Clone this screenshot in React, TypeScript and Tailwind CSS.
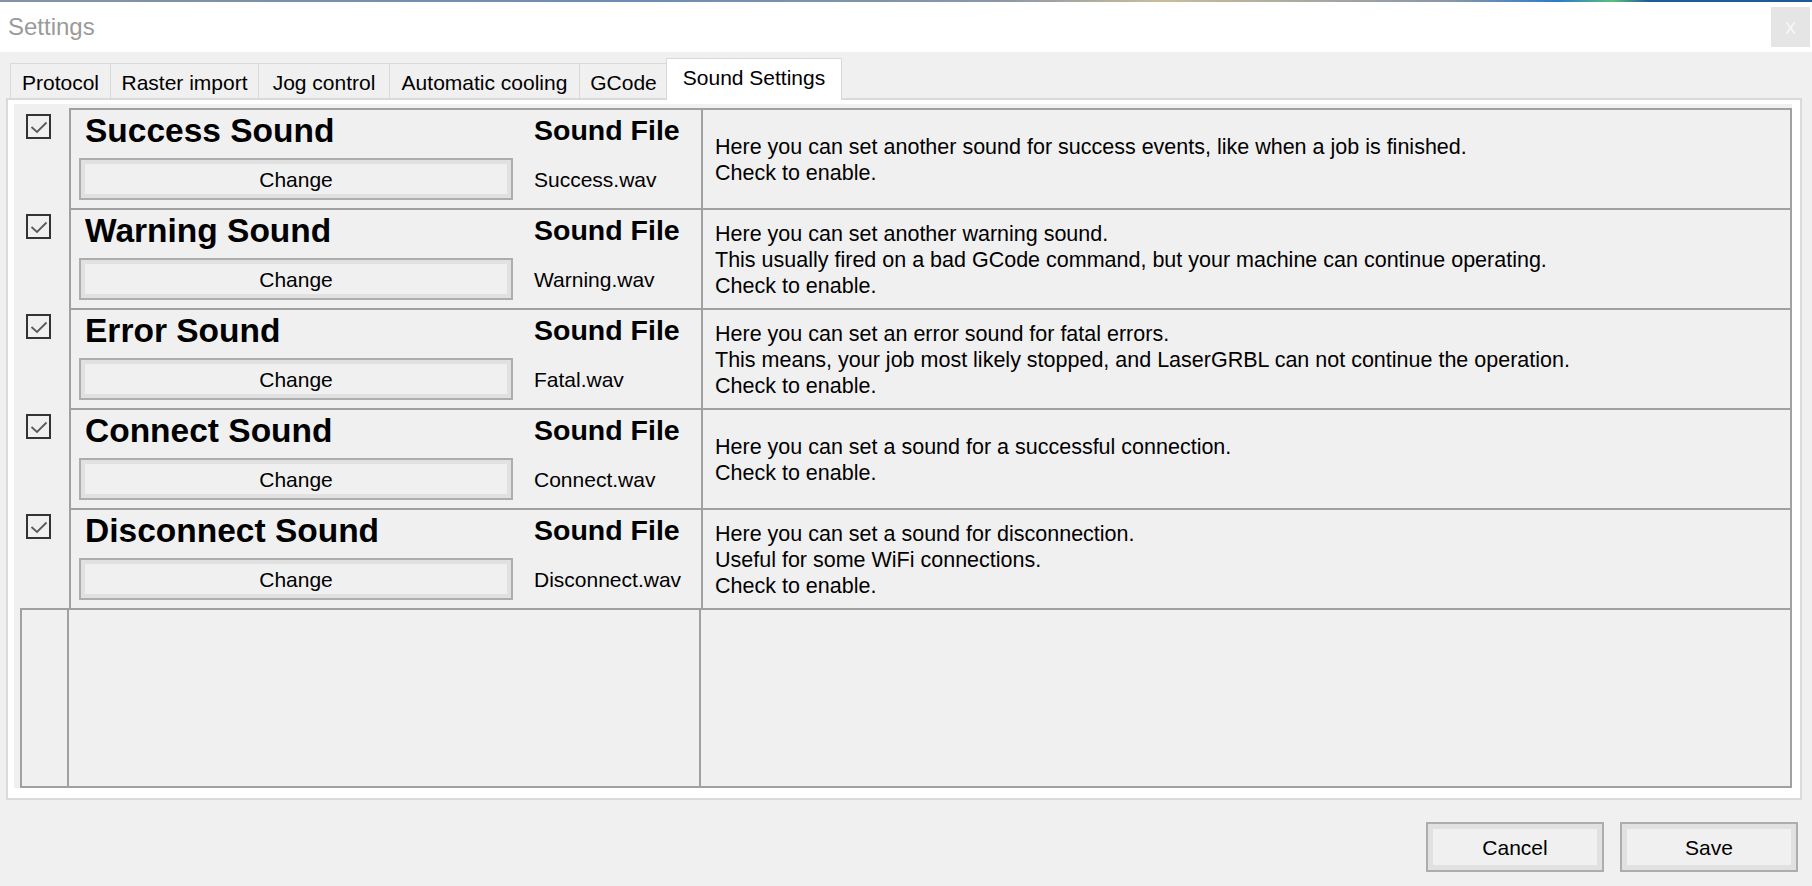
import React from 'react';

interface SoundRow {
  title: string;
  file: string;
  lines: string[];
}

const rows: SoundRow[] = [
  {
    title: 'Success Sound',
    file: 'Success.wav',
    lines: ['Here you can set another sound for success events, like when a job is finished.', 'Check to enable.'],
  },
  {
    title: 'Warning Sound',
    file: 'Warning.wav',
    lines: [
      'Here you can set another warning sound.',
      'This usually fired on a bad GCode command, but your machine can continue operating.',
      'Check to enable.',
    ],
  },
  {
    title: 'Error Sound',
    file: 'Fatal.wav',
    lines: [
      'Here you can set an error sound for fatal errors.',
      'This means, your job most likely stopped, and LaserGRBL can not continue the operation.',
      'Check to enable.',
    ],
  },
  {
    title: 'Connect Sound',
    file: 'Connect.wav',
    lines: ['Here you can set a sound for a successful connection.', 'Check to enable.'],
  },
  {
    title: 'Disconnect Sound',
    file: 'Disconnect.wav',
    lines: ['Here you can set a sound for disconnection.', 'Useful for some WiFi connections.', 'Check to enable.'],
  },
];

const tabs = [
  { label: 'Protocol', w: 'w-[100px]' },
  { label: 'Raster import', w: 'w-[148px]' },
  { label: 'Jog control', w: 'w-[131px]' },
  { label: 'Automatic cooling', w: 'w-[190px]' },
  { label: 'GCode', w: 'w-[89px]' },
];

function CheckBox() {
  return (
    <div className="w-[25px] h-[25px] border-2 border-[#333333] bg-[#f0f0f0]">
      <svg width="21" height="21" viewBox="0 0 21 21">
        <polyline points="3.5,11 9,16 18.5,6.5" fill="none" stroke="#5a5a5a" strokeWidth="1.8" />
      </svg>
    </div>
  );
}

function Row({ row }: { row: SoundRow }) {
  return (
    <div className="flex h-[100px]">
      <div className="w-[49px] pl-[6px] pt-[6px]">
        <CheckBox />
      </div>
      <div className="flex flex-1 border-t-2 border-x-2 border-[#a0a0a0]">
        <div className="flex w-[632px] border-r-2 border-[#a0a0a0]">
          <div className="flex w-[449px] flex-col pl-[8px]">
            <div className="mt-[2px] pl-[6px] text-[33.5px] font-bold leading-[38px] text-black whitespace-nowrap">
              {row.title}
            </div>
            <button className="mt-[8px] flex h-[42px] w-[434px] items-center justify-center border-2 border-[#adadad] bg-[#f0f0f0] text-[21px] leading-none text-black shadow-[inset_0_0_0_4px_#e1e1e1]">
              Change
            </button>
          </div>
          <div className="flex flex-col pl-[14px]">
            <div className="mt-[4px] text-[28.5px] font-bold leading-[32px] text-black whitespace-nowrap">Sound File</div>
            <div className="mt-[22px] text-[21px] leading-[24px] text-black whitespace-nowrap">{row.file}</div>
          </div>
        </div>
        <div className="flex flex-1 flex-col justify-center pl-[12px] pt-[2px] text-[21.5px] leading-[26px] text-black">
          {row.lines.map((line) => (
            <div key={line} className="whitespace-nowrap">
              {line}
            </div>
          ))}
        </div>
      </div>
    </div>
  );
}

export default function App() {
  return (
    <div className="flex h-[886px] w-[1812px] flex-col overflow-hidden bg-[#f0f0f0] font-['Liberation_Sans',Arial,sans-serif]">
      {/* desktop edge behind the window */}
      <div className="h-[2px] bg-[linear-gradient(90deg,#8592a6_0%,#6d8db4_35%,#8a96a8_55%,#c9bd99_64%,#8a96a8_80%,#2a7bc8_86%,#5bc07a_89%,#1e5a9a_91%,#1e5a9a_100%)]" />

      {/* title bar */}
      <div className="flex h-[50px] items-start justify-between bg-white">
        <div className="mt-[11px] pl-[8px] text-[24px] leading-[28px] text-[#9a9a9a]">Settings</div>
        <div className="mr-[2px] mt-[5px] flex h-[40px] w-[39px] items-center justify-center bg-[#e5e5e5] text-[22px] leading-none text-[#f6f6f6]">
          x
        </div>
      </div>

      {/* tab strip */}
      <div className="flex h-[46px] items-end pl-[10px] pt-[6px]">
        {tabs.map((t, i) => (
          <div
            key={t.label}
            className={`${t.w} h-[35px] border-l border-t border-[#d9d9d9] pt-[7px] text-center text-[21px] leading-[24px] text-black whitespace-nowrap ${
              i === tabs.length - 1 ? 'border-r' : ''
            }`}
          >
            {t.label}
          </div>
        ))}
        <div className="relative z-10 -mb-[2px] -ml-[2px] h-[42px] w-[176px] border-x border-t border-[#d9d9d9] bg-white pt-[7px] text-center text-[21px] leading-[24px] text-black whitespace-nowrap">
          Sound Settings
        </div>
      </div>

      {/* tab page */}
      <div className="ml-[6px] mr-[10px] h-[702px] border-2 border-[#dadada] bg-white pb-[10px] pl-[6px] pr-[8px] pt-[4px]">
        <div className="h-full bg-[#f0f0f0] pl-[6px] pt-[4px]">
          <div className="flex h-[680px] w-[1772px] flex-col">
            {rows.map((r) => (
              <Row key={r.title} row={r} />
            ))}
            <div className="flex h-[180px] border-2 border-[#a0a0a0]">
              <div className="w-[47px] border-r-2 border-[#a0a0a0]" />
              <div className="w-[632px] border-r-2 border-[#a0a0a0]" />
              <div className="flex-1" />
            </div>
          </div>
        </div>
      </div>

      {/* footer buttons */}
      <div className="flex justify-end gap-[16px] pr-[14px] pt-[22px]">
        <button className="flex h-[50px] w-[178px] items-center justify-center border-2 border-[#adadad] bg-[#f0f0f0] text-[21px] leading-none text-black shadow-[inset_0_0_0_5px_#e1e1e1]">
          Cancel
        </button>
        <button className="flex h-[50px] w-[178px] items-center justify-center border-2 border-[#adadad] bg-[#f0f0f0] text-[21px] leading-none text-black shadow-[inset_0_0_0_5px_#e1e1e1]">
          Save
        </button>
      </div>
    </div>
  );
}
